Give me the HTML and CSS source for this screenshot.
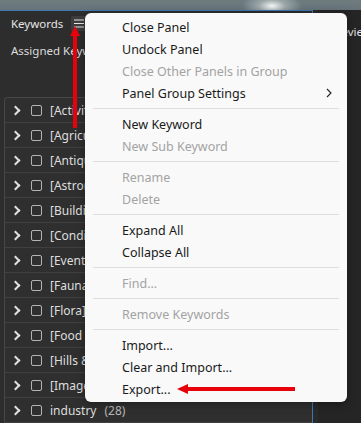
FILE: index.html
```html
<!DOCTYPE html>
<html lang="en">
<head>
    <meta charset="UTF-8">
    <meta name="viewport" content="width=device-width, initial-scale=1.0">
    <title>Keywords Panel Menu</title>
    <link rel="stylesheet" href="styles.css">
</head>
<body>
    <div class="topbar"></div>

    <div class="workspace">
        <div class="panel">
            <div class="panel-head">
                <span class="panel-title">Keywords</span>
                <span class="menu-btn">
                    <svg width="10" height="9" viewBox="0 0 10 9">
                        <path d="M0 1h10M0 4.5h10M0 8h10" stroke="#e8e8e8" stroke-width="1.2"/>
                    </svg>
                </span>
            </div>
            <div class="assigned">Assigned Keywords:</div>

            <div class="kw-list">
                <div class="kw-row"><span class="chev"></span><span class="check"></span><span class="kw-name">[Activities]</span></div>
                <div class="kw-row"><span class="chev"></span><span class="check"></span><span class="kw-name">[Agriculture]</span></div>
                <div class="kw-row"><span class="chev"></span><span class="check"></span><span class="kw-name">[Antiques]</span></div>
                <div class="kw-row"><span class="chev"></span><span class="check"></span><span class="kw-name">[Astronomy]</span></div>
                <div class="kw-row"><span class="chev"></span><span class="check"></span><span class="kw-name">[Buildings]</span></div>
                <div class="kw-row"><span class="chev"></span><span class="check"></span><span class="kw-name">[Conditions]</span></div>
                <div class="kw-row"><span class="chev"></span><span class="check"></span><span class="kw-name">[Events]</span></div>
                <div class="kw-row"><span class="chev"></span><span class="check"></span><span class="kw-name">[Fauna]</span></div>
                <div class="kw-row"><span class="chev"></span><span class="check"></span><span class="kw-name">[Flora]</span></div>
                <div class="kw-row"><span class="chev"></span><span class="check"></span><span class="kw-name">[Food &amp; Drink]</span></div>
                <div class="kw-row"><span class="chev"></span><span class="check"></span><span class="kw-name">[Hills &amp; Mountains]</span></div>
                <div class="kw-row"><span class="chev"></span><span class="check"></span><span class="kw-name">[Images]</span></div>
                <div class="kw-row"><span class="chev"></span><span class="check"></span><span class="kw-name">industry</span><span class="kw-count">(28)</span></div>
            </div>
        </div>

        <div class="side-panel">
            <span class="side-title">Preview</span>
        </div>
    </div>

    <div class="context-menu">
        <div class="item">Close Panel</div>
        <div class="item">Undock Panel</div>
        <div class="item disabled">Close Other Panels in Group</div>
        <div class="item has-sub">Panel Group Settings
            <svg class="sub-arrow" width="6" height="10" viewBox="0 0 6 10">
                <path d="M1 1l4 4-4 4" fill="none" stroke="#222" stroke-width="1.1"/>
            </svg>
        </div>
        <div class="sep"></div>
        <div class="item">New Keyword</div>
        <div class="item disabled">New Sub Keyword</div>
        <div class="sep"></div>
        <div class="item disabled">Rename</div>
        <div class="item disabled">Delete</div>
        <div class="sep"></div>
        <div class="item">Expand All</div>
        <div class="item">Collapse All</div>
        <div class="sep"></div>
        <div class="item disabled">Find...</div>
        <div class="sep"></div>
        <div class="item disabled">Remove Keywords</div>
        <div class="sep"></div>
        <div class="item">Import...</div>
        <div class="item">Clear and Import...</div>
        <div class="item">Export...</div>
    </div>

    <!-- annotation arrows -->
    <svg class="arrow-up" width="12" height="102" viewBox="0 0 12 102">
        <path d="M6 0L11 10H1Z" fill="#e8000b"/>
        <rect x="4" y="8" width="4" height="94" fill="#e8000b"/>
    </svg>
    <svg class="arrow-left" width="118" height="12" viewBox="0 0 118 12">
        <path d="M0 6L11 1V11Z" fill="#e8000b"/>
        <rect x="9" y="4" width="109" height="4" fill="#e8000b"/>
    </svg>
</body>
</html>
```

FILE: styles.css
```css
body {
    margin: 0;
    width: 361px;
    height: 423px;
    overflow: hidden;
    background-color: #2a2a2a;
    font-family: "Noto Sans", "Open Sans", sans-serif;
    position: relative;
}
.topbar {
    height: 10px;
    background: radial-gradient(ellipse 30px 14px at 272px 6px, #f4f6f6 0%, rgba(200,210,210,0.5) 45%, rgba(110,122,125,0) 100%), linear-gradient(#6f7c7f, #66737a);
}
.workspace {
    display: flex;
    height: 413px;
}
.panel {
    width: 312px;
    border-top: 1px solid #3d79b0;
    border-right: 1px solid #3d79b0;
    background-color: #2d2d2d;
}
.panel-head {
    display: flex;
    align-items: center;
    gap: 8px;
    height: 22px;
    padding: 1px 0 0 11px;
}
.panel-title {
    color: #e6e6e6;
    font-size: 11.5px;
}
.menu-btn {
    display: flex;
    align-items: center;
    justify-content: center;
    width: 16px;
    height: 15px;
    background-color: #3d3d3d;
    border-radius: 2px;
}
.assigned {
    margin-top: 9px;
    padding-left: 11px;
    color: #dcdcdc;
    font-size: 11.5px;
    line-height: 16px;
}
.kw-list {
    margin: 38px 0 0 4px;
    border-top: 1px solid #474747;
    border-left: 1px solid #474747;
    border-top-left-radius: 4px;
    background-color: #2f2f2f;
}
.kw-row {
    display: flex;
    align-items: center;
    height: 25px;
    box-sizing: border-box;
    border-bottom: 1px solid #404040;
    padding-left: 6px;
}
.chev {
    width: 5px;
    height: 5px;
    border-top: 2px solid #e0e0e0;
    border-right: 2px solid #e0e0e0;
    transform: rotate(45deg);
    margin: 1px 12px 0 1px;
}
.check {
    width: 9px;
    height: 9px;
    border: 1.5px solid #b4b4b4;
    border-radius: 2px;
    margin-right: 8px;
}
.kw-name {
    color: #dedede;
    font-size: 12px;
    white-space: nowrap;
}
.kw-count {
    color: #b8b8b8;
    font-size: 12px;
    margin-left: 8px;
}
.side-panel {
    flex: 1;
    margin-left: 5px;
    background-color: #252525;
    padding: 9px 0 0 12px;
    overflow: hidden;
}
.side-title {
    color: #e0e0e0;
    font-size: 11.5px;
    white-space: nowrap;
}
.context-menu {
    position: absolute;
    left: 85px;
    top: 13px;
    width: 262px;
    height: 389px;
    box-sizing: border-box;
    padding: 3px 0 2px;
    background-color: #f9f9f9;
    border-radius: 6px;
    box-shadow: 0 2px 8px rgba(0,0,0,0.35);
}
.item {
    display: flex;
    align-items: center;
    height: 22px;
    padding-left: 37px;
    color: #1a1a1a;
    font-size: 12.5px;
}
.item.disabled {
    color: #a3a3a3;
}
.sub-arrow {
    margin-left: auto;
    margin-right: 15px;
}
.sep {
    height: 1px;
    margin: 4px 8px 4px 8px;
    background-color: #dedede;
}
.arrow-up {
    position: absolute;
    left: 69px;
    top: 26px;
}
.arrow-left {
    position: absolute;
    left: 177px;
    top: 383px;
}
```
